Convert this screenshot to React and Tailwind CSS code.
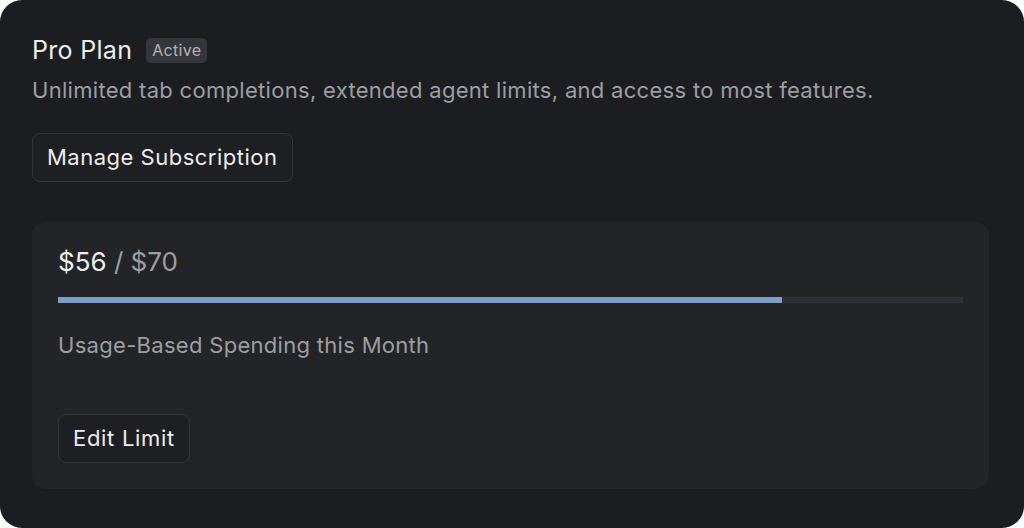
import React from 'react';

const App = () => {
  const spent = 56;
  const limit = 70;
  const pct = (spent / limit) * 100;

  return (
    <div className="w-[1024px] h-[528px] bg-white" style={{ fontFamily: 'Inter, "Noto Sans", sans-serif' }}>
      <div className="h-full rounded-[22px] bg-[#1c1d21] pl-8 pr-[35px] pt-[34px] pb-[39px] flex flex-col">
        {/* Plan header */}
        <div className="flex items-center gap-[14px] h-8">
          <h2 className="text-[25px] leading-8 text-[#ededed] tracking-[0.3px]">Pro Plan</h2>
          <span className="rounded-[5px] bg-[#35363b] px-[6px] h-[25px] flex items-center text-[16px] text-[#b3b3b5] tracking-[0.3px]">Active</span>
        </div>
        <p className="mt-[9px] text-[22px] leading-[30px] tracking-[0.3px] text-[#9d9ea1]">
          Unlimited tab completions, extended agent limits, and access to most features.
        </p>
        <div className="mt-[28px]">
          <button className="h-[49px] px-[14px] rounded-[8px] border border-[#34353a] bg-[#1e1f23] text-[22px] tracking-[0.5px] text-[#ededed]">
            Manage Subscription
          </button>
        </div>

        {/* Usage card */}
        <div className="mt-10 flex-1 rounded-[14px] bg-[#232428] px-[26px] pt-[24px] flex flex-col">
          <div className="text-[26px] leading-8">
            <span className="text-[#ededed]">${spent}</span>
            <span className="text-[#9d9ea1]"> / ${limit}</span>
          </div>
          <div className="mt-[19px] h-[6px] w-full bg-[#2d3036]">
            <div className="h-full bg-[#7d9fc5]" style={{ width: `${pct}%` }} />
          </div>
          <p className="mt-[27px] text-[22px] leading-[30px] tracking-[0.3px] text-[#9d9ea1]">Usage-Based Spending this Month</p>
          <div className="mt-[54px]">
            <button className="h-[49px] px-[14px] rounded-[8px] border border-[#34353a] bg-[#1e1f23] text-[22px] tracking-[0.7px] text-[#ededed]">
              Edit Limit
            </button>
          </div>
        </div>
      </div>
    </div>
  );
};

export default App;
